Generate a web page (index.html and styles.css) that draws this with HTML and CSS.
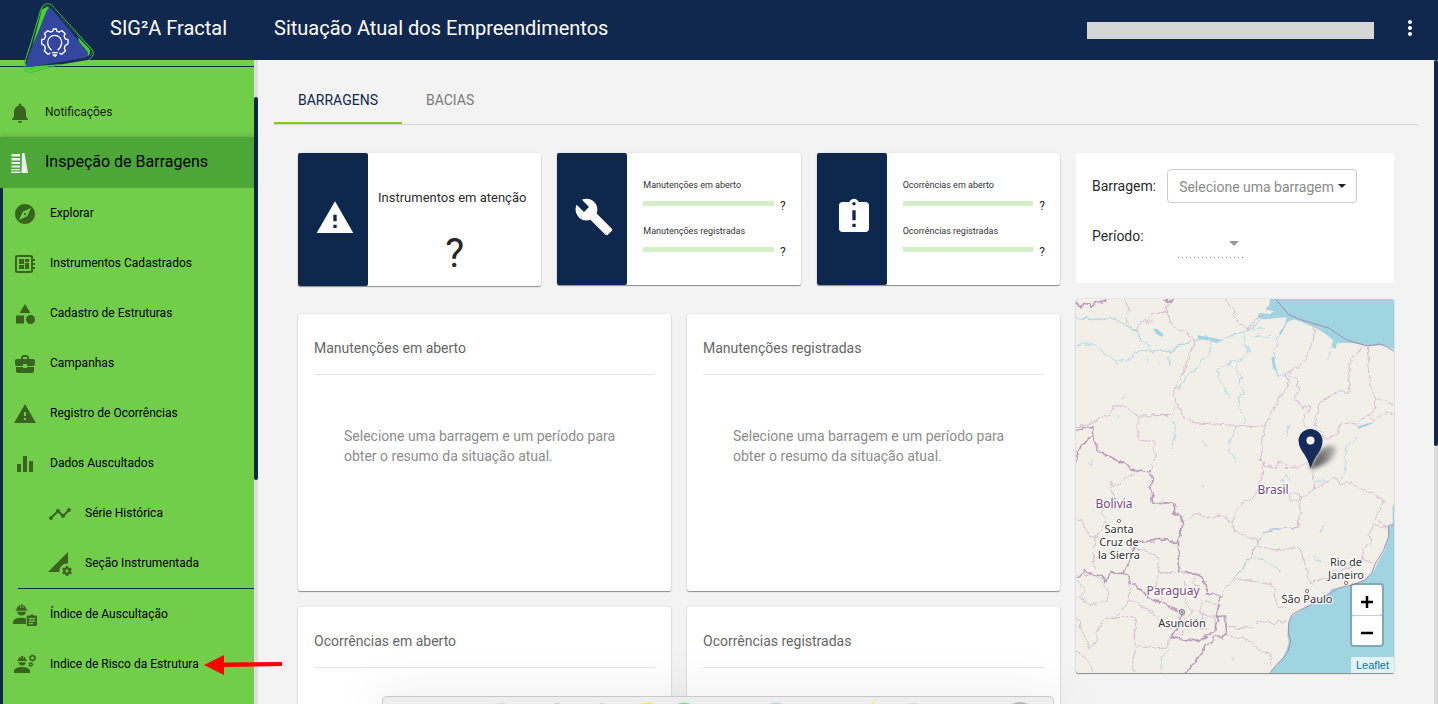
FILE: index.html
```html
<!DOCTYPE html>
<html lang="pt-BR">
<head>
<meta charset="utf-8">
<title>SIG²A Fractal</title>
<link rel="stylesheet" href="styles.css">
</head>
<body>
<header class="topbar">
  <a class="brand" href="#">
    <svg class="logo" viewBox="69 0 216 222" aria-hidden="true">
      <path d="M126 21Q134 8 149 12Q158 15 164 25L274 146Q288 163 270 176Q264 180 255 180L180 193L98 216Q68 222 72 194Z" fill="none" stroke="#3fbe39" stroke-width="3"/>
      <path d="M120 30Q126 16 146 18L276 150Q280 166 262 172L92 209Q74 208 78 190Z" fill="none" stroke="#3fae39" stroke-width="1.5"/>
      <path d="M126 28L142 20L148 24L86 180Z" fill="#45d52a"/>
      <path d="M152 18L270 164Q271 176 262 180L176 194L86 202Q72 196 78 180Z" fill="#1c2a56"/>
      <path d="M234 112L268 146Q275 158 264 168L240 150ZM78 200L190 192L92 209Q82 208 78 200Z" fill="#45d52a"/>
      <path d="M144 26Q150 22 156 28L262 154Q268 166 256 173L90 201Q76 200 79 186L138 36Z" fill="#34479e"/>
      <g fill="none" stroke="#fff" stroke-width="4" stroke-linejoin="round">
        <path d="M151 159L144 163L133 153L136 145L133 136L125 132V119L133 117L137 108L133 101L143 92L151 96L158 94L160 87H169L171 94L178 96L186 92L196 101L192 108L196 117L204 119V132L196 136L193 145L196 153L185 163L178 159"/>
        <path d="M155 151Q143 141 143 127A21 21 0 0 1 185 127Q185 141 173 151"/>
        <path d="M156 158H173M158 165H171M162 169H167"/>
      </g>
    </svg>
    <span class="brand-name">SIG²A Fractal</span>
  </a>
  <h1 class="page-title">Situação Atual dos Empreendimentos</h1>
  <div class="user-box"></div>
  <button class="more" aria-label="Mais opções"><svg viewBox="0 0 24 24"><path d="M12 8c1.100 0 2-.9 2-2s-.9-2-2-2-2 .9-2 2 .9 2 2 2zm0 2c-1.100 0-2 .9-2 2s.9 2 2 2 2-.9 2-2-.9-2-2-2zm0 6c-1.100 0-2 .9-2 2s.9 2 2 2 2-.9 2-2-.9-2-2-2z"/></svg></button>
</header>

<div class="shell">
  <nav class="sidebar">
    <a class="nav-item" href="#"><svg class="icon" viewBox="0 0 24 24"><path d="M12 22c1.100 0 2-.9 2-2h-4c0 1.100.89 2 2 2zm6-6v-5c0-3.070-1.640-5.640-4.500-6.320V4c0-.83-.67-1.500-1.500-1.500s-1.500.67-1.500 1.500v.68C7.630 5.360 6 7.920 6 11v5l-2 2v1h16v-1l-2-2z"/></svg>Notificações</a>
    <a class="nav-item active" href="#"><svg class="icon" viewBox="0 0 24 24"><path d="M3.500 3h8.500v2.500H3.500zM3.500 7H12v2.500H3.500zM3.500 11H12v2H3.500zM3.500 14.500H12v2H3.500zM3 18h9v1.300H3zM3 20.500h9.500V22H3zM14 2h2.500L20 22h-6.500z"/></svg>Inspeção de Barragens</a>
    <div class="submenu">
      <a class="nav-item" href="#"><svg class="icon" viewBox="0 0 24 24"><path d="M12 10.900c-.61 0-1.100.49-1.100 1.100s.49 1.100 1.100 1.100c.61 0 1.100-.49 1.100-1.100s-.49-1.100-1.100-1.100zM12 2C6.480 2 2 6.480 2 12s4.480 10 10 10 10-4.480 10-10S17.520 2 12 2zm2.190 12.190L6 18l3.810-8.190L18 6l-3.810 8.190z"/></svg>Explorar</a>
      <a class="nav-item" href="#"><svg class="icon" viewBox="0 0 24 24"><path d="M22 9V7h-2V5c0-1.100-.9-2-2-2H4c-1.100 0-2 .9-2 2v14c0 1.100.9 2 2 2h14c1.100 0 2-.9 2-2v-2h2v-2h-2v-2h2v-2h-2V9h2zm-4 10H4V5h14v14zM6 13h5v4H6zM12 7h4v3h-4zM6 7h5v5H6zM12 11h4v6h-4z"/></svg>Instrumentos Cadastrados</a>
      <a class="nav-item" href="#"><svg class="icon" viewBox="0 0 24 24"><path d="M12 2L6.500 11h11zM3 13.500h8v8H3z"/><circle cx="17.500" cy="17.500" r="4.500"/></svg>Cadastro de Estruturas</a>
      <a class="nav-item" href="#"><svg class="icon" viewBox="0 0 24 24"><path d="M10 16v-1H3.010L3 19c0 1.110.89 2 2 2h14c1.110 0 2-.89 2-2v-4h-7v1h-4zm10-9h-4.010V5l-2-2h-4l-2 2v2H4c-1.100 0-2 .9-2 2v3c0 1.110.89 2 2 2h6v-2h4v2h6c1.100 0 2-.9 2-2V9c0-1.100-.9-2-2-2zm-6 0h-4V5h4v2z"/></svg>Campanhas</a>
      <a class="nav-item" href="#"><svg class="icon" viewBox="0 0 24 24"><path d="M1 21h22L12 2 1 21zm12-3h-2v-2h2v2zm0-4h-2v-4h2v4z"/></svg>Registro de Ocorrências</a>
      <a class="nav-item" href="#"><svg class="icon" viewBox="0 0 24 24"><path d="M10 20h4V4h-4v16zm-6 0h4v-8H4v8zM16 9v11h4V9h-4z"/></svg>Dados Auscultados</a>
      <a class="nav-item nested" href="#"><svg class="icon" viewBox="0 0 24 24"><path d="M23 8c0 1.100-.9 2-2 2-.18 0-.35-.02-.51-.07l-3.560 3.550c.05.16.07.34.07.52 0 1.100-.9 2-2 2s-2-.9-2-2c0-.18.02-.36.07-.52l-2.550-2.550c-.16.05-.34.07-.52.07s-.36-.02-.52-.07l-4.550 4.560c.05.16.07.33.07.51 0 1.100-.9 2-2 2s-2-.9-2-2 .9-2 2-2c.18 0 .35.02.51.07l4.560-4.550C8.020 9.360 8 9.180 8 9c0-1.100.9-2 2-2s2 .9 2 2c0 .18-.02.36-.07.52l2.550 2.550c.16-.05.34-.07.52-.07s.36.02.52.07l3.550-3.560C19.020 8.350 19 8.180 19 8c0-1.100.9-2 2-2s2 .9 2 2z"/></svg>Série Histórica</a>
      <a class="nav-item nested" href="#"><svg class="icon" viewBox="0 0 24 24"><path d="M18.990 11.500c.34 0 .67.03 1 .07L20 0 0 20h11.560c-.04-.33-.07-.66-.07-1 0-4.140 3.360-7.500 7.500-7.500zm3.710 7.990c.02-.16.04-.32.04-.49 0-.17-.01-.33-.04-.49l1.060-.83c.09-.08.12-.21.06-.32l-1-1.730c-.06-.11-.19-.15-.31-.11l-1.240.5c-.26-.2-.54-.37-.85-.49l-.19-1.320c-.01-.12-.12-.21-.24-.21h-2c-.12 0-.23.09-.25.21l-.19 1.320c-.3.13-.59.29-.85.49l-1.240-.5c-.11-.04-.24 0-.31.11l-1 1.730c-.06.11-.04.24.06.32l1.060.83c-.02.16-.03.32-.03.49 0 .17.01.33.03.49l-1.060.83c-.09.08-.12.21-.06.32l1 1.730c.06.11.19.15.31.11l1.240-.5c.26.2.54.37.85.49l.19 1.320c.02.12.12.21.25.21h2c.12 0 .23-.09.25-.21l.19-1.320c.3-.13.59-.29.84-.49l1.250.5c.11.04.24 0 .31-.11l1-1.730c.06-.11.03-.24-.06-.32l-1.070-.83zm-3.710 1.010c-.83 0-1.500-.67-1.500-1.500s.67-1.500 1.500-1.500 1.500.67 1.500 1.500-.67 1.500-1.500 1.500z"/></svg>Seção Instrumentada</a>
      <hr class="nav-rule">
      <a class="nav-item" href="#"><svg class="icon" viewBox="0 0 24 24"><path d="M3.500 6.500Q4 3 7 2v3h.7V1.200h2V5h.7V2Q13 3 13.500 6.500h.7v1.200H2.800V6.500zM4 8.800h9Q12.500 12.500 8.500 12.500T4 8.800zM0 21v-2.500Q1 15 8 14.800q3 0 5 .7V21z"/><path d="M15 12.500h2.500q1.500-2.500 3 0H23q1 0 1 1V22q0 1-1 1h-8q-1.200 0-1.200-1v-8.500q0-1 1.200-1zM15.800 15v1.300h6.400V15zm0 2.500v1.200h6.400v-1.200zm0 2.500v1.200h4.200V20z" fill-rule="evenodd"/></svg>Índice de Auscultação</a>
      <a class="nav-item" href="#"><svg class="icon" viewBox="0 0 24 24"><path d="M5 7Q5.500 4.300 7.600 3.800v2h.6V3h2v2.800h.6v-2Q13 4.300 13.300 7h.7v1.100H4.300V7zM5.500 9.300h7.300Q12.500 12.500 9.200 12.500T5.500 9.300zM1 20v-2.400Q2 14.200 9 14.100t8 3.500V20z"/><g fill="none" stroke="currentColor"><circle cx="19.500" cy="5" r="2.300" stroke-width="1.500"/><circle cx="19.500" cy="5" r="3.200" stroke-width="1" stroke-dasharray="1.600 1.750"/><circle cx="17.800" cy="11.500" r="1.400" stroke-width="1.200"/><circle cx="17.800" cy="11.500" r="2.200" stroke-width=".8" stroke-dasharray="1.100 1.200"/></g></svg>Indice de Risco da Estrutura
        <svg class="pointer" viewBox="0 0 78 20" aria-hidden="true"><path d="M20 7.500L78 7V11L20 12z" fill="#f00"/><path d="M0 10L20 0V20z" fill="#f00"/></svg>
      </a>
    </div>
  </nav>
  <div class="rail side-rail"><div class="thumb"></div></div>

  <main class="content">
    <div class="tabs" role="tablist">
      <button class="tab selected" role="tab" aria-selected="true">BARRAGENS</button>
      <button class="tab" role="tab" aria-selected="false">BACIAS</button>
    </div>
    <div class="board">
      <div class="primary">
        <div class="stats">
          <section class="stat stat-alert">
            <div class="stat-icon"><svg viewBox="0 0 24 24"><path d="M1 21h22L12 2 1 21zm12-3h-2v-2h2v2zm0-4h-2v-4h2v4z"/></svg></div>
            <div class="stat-main"><p class="stat-title">Instrumentos em atenção</p><p class="stat-value">?</p></div>
          </section>
          <section class="stat">
            <div class="stat-icon"><svg viewBox="0 0 24 24"><path d="M22.700 19l-9.100-9.100c.9-2.300.4-5-1.500-6.900-2-2-5-2.400-7.400-1.300L9 6 6 9 1.600 4.700C.4 7.100.9 10.100 2.900 12.100c1.900 1.900 4.600 2.400 6.900 1.500l9.100 9.100c.4.4 1 .4 1.400 0l2.300-2.300c.5-.4.5-1.100.1-1.400z"/></svg></div>
            <div class="stat-bars">
              <div class="meter"><p class="meter-label">Manutenções em aberto</p><div class="meter-row"><span class="track"></span><span>?</span></div></div>
              <div class="meter"><p class="meter-label">Manutenções registradas</p><div class="meter-row"><span class="track"></span><span>?</span></div></div>
            </div>
          </section>
          <section class="stat">
            <div class="stat-icon"><svg viewBox="0 0 24 24"><path d="M19 3h-4.180C14.400 1.840 13.300 1 12 1c-1.300 0-2.400.84-2.820 2H5c-1.100 0-2 .9-2 2v14c0 1.100.9 2 2 2h14c1.100 0 2-.9 2-2V5c0-1.100-.9-2-2-2zm-6 15h-2v-2h2v2zm0-4h-2V8h2v6zm-1-9c-.55 0-1-.45-1-1s.45-1 1-1 1 .45 1 1-.45 1-1 1z"/></svg></div>
            <div class="stat-bars">
              <div class="meter"><p class="meter-label">Ocorrências em aberto</p><div class="meter-row"><span class="track"></span><span>?</span></div></div>
              <div class="meter"><p class="meter-label">Ocorrências registradas</p><div class="meter-row"><span class="track"></span><span>?</span></div></div>
            </div>
          </section>
        </div>
        <div class="panels">
          <section class="panel"><h2>Manutenções em aberto</h2><p>Selecione uma barragem e um período para obter o resumo da situação atual.</p></section>
          <section class="panel"><h2>Manutenções registradas</h2><p>Selecione uma barragem e um período para obter o resumo da situação atual.</p></section>
          <section class="panel"><h2>Ocorrências em aberto</h2></section>
          <section class="panel"><h2>Ocorrências registradas</h2></section>
        </div>
      </div>
      <aside class="secondary">
        <form class="filters">
          <div class="field"><label for="dam">Barragem:</label>
            <div class="select-wrap"><select id="dam" class="dam-select"><option>Selecione uma barragem</option></select><svg class="caret" viewBox="0 0 8 4"><path d="M0 0h8L4 4z"/></svg></div></div>
          <div class="field"><label for="period">Período:</label>
            <div class="select-wrap period-wrap"><select id="period" class="period-select" disabled><option></option></select><svg class="caret" viewBox="0 0 10 5"><path d="M0 0h10L5 5z"/></svg><svg class="dots" viewBox="0 0 67 1"><path d="M0 0.5H67"/></svg></div></div>
        </form>
        <div class="map">
          <svg class="map-art" viewBox="0 0 318 374" preserveAspectRatio="xMidYMid slice">
            <defs>
              <filter id="soft" x="-50%" y="-50%" width="200%" height="200%"><feGaussianBlur stdDeviation="2"/></filter>
              <filter id="wander" x="0" y="0" width="100%" height="100%"><feTurbulence type="fractalNoise" baseFrequency=".045" numOctaves="3" seed="4"/><feDisplacementMap in="SourceGraphic" scale="20" xChannelSelector="R" yChannelSelector="G"/></filter>
              <linearGradient id="shade" x1="0" x2="1"><stop offset="0" stop-color="#222" stop-opacity=".9"/><stop offset="1" stop-color="#222" stop-opacity=".25"/></linearGradient>
            </defs>
            <g transform="translate(-6 -9) scale(.33333)">
              <g class="water">
                <path d="M600 20H980V182L940 166L892 168L850 160L822 158L800 160L798 176L786 172L788 150L770 134L752 122L732 112L700 98L672 88L652 96L640 120L632 136L626 132L645 104L650 82L620 84L580 88L562 82L568 70L600 72L612 64L585 58L598 46Z"/>
                <path d="M980 630L968 648L968 704L954 712L956 740L945 778L926 812L912 842L884 870L834 890L786 896L776 910L742 932L715 948L680 968L660 984L654 1008L652 1034L656 1058L648 1084L640 1102L620 1126L596 1152H980Z"/>
                <path d="M604 202L612 200L616 226L622 244L610 238ZM250 116L262 118L280 132L276 140L262 134L256 128ZM862 410L886 402L912 396L906 402L888 408L866 416ZM382 136L420 142L458 150L440 160L420 152L386 148Z"/>
              </g>
              <g class="rivers" filter="url(#wander)">
                <path d="M16 82L40 86L76 90L100 86L130 86L150 96L176 112L202 124L212 144L230 168L244 182L282 180L306 186L320 170L350 158L374 152L400 142L440 156L456 148L480 138L516 126L540 120L560 102L572 84L596 74" stroke-width="4"/>
                <path d="M16 166L50 158L66 162L82 176L100 186L124 206L136 214L160 208L184 210L196 190L216 182L244 182M124 206L146 224M240 196L232 212M270 212L266 226M292 206L296 222"/>
                <path d="M426 154L420 180L410 200L390 218L376 240L352 256L336 284L318 296" stroke-width="3"/>
                <path d="M520 132L526 160L538 180L520 200L502 216L500 240L512 262L510 286L526 306L512 312L502 350L524 380L524 402"/>
                <path d="M520 202L490 214L440 238L450 270L466 302L478 328M524 160L536 190M632 134L620 158L610 180L612 222L622 256L642 258M548 140L602 136M548 104L552 124L582 112M502 410L480 450L476 480L500 518M164 312L156 326M398 452L412 466M400 588L408 590"/>
                <path d="M310 396L316 432L304 476M652 408V444M860 436L830 474L828 522L814 566M630 572L652 552L660 570M736 572L776 574M786 150L804 166M786 168L774 206M50 522L68 518M64 510L62 530M140 376L146 384M636 568L640 580M556 798L590 816L632 840M728 796L748 806M732 812L754 818M762 704L752 732M392 1000L430 968M486 1102L490 1112M270 1150L278 1100L294 1078"/>
                <path d="M330 676L340 694L334 730L322 758M686 708L664 716L634 714L586 724L566 752L540 802L524 828L496 864L470 890L454 914L446 950L438 976L438 1000L432 1030" stroke="#a9bfd8"/>
              </g>
              <g class="states" filter="url(#wander)">
                <path d="M166 27L174 62L170 96L200 124L206 96L224 92L236 104L248 70L292 66M296 27L292 66L296 88L312 112L346 128L376 154L350 220L328 270L308 306L320 330L314 350L310 376L204 378L188 368L160 348H134L120 376L90 382L70 398L46 404L16 412"/>
                <path d="M320 330L340 378L370 398L588 412M468 27L480 48L492 60L500 92L520 112L538 116L546 98L568 80L588 60L618 32"/>
                <path d="M734 104L730 150L718 180L706 206L690 228L664 240L642 258L660 268L654 290L640 310L624 318L624 342L604 372L590 402L576 440L574 514L580 514L576 560L566 590L540 632L518 640L504 662L492 680L488 700L490 722L560 752L566 762L604 778L634 780L686 772L696 790L700 818L714 840L714 862L724 878L750 868L774 864L792 840L826 840L868 830L876 808L910 816"/>
                <path d="M664 240L660 256L682 268L686 306L678 320L696 350L716 350L714 364L700 374L702 402L718 416L730 440L732 506L724 530L730 560L734 596L708 616L694 624L688 648L696 664L686 678L690 706L670 716"/>
                <path d="M878 172L862 190L840 208V240L836 270L840 306L802 306L776 324L750 338L748 360L736 380V402L740 416L756 430L770 448L800 432L814 400L838 396L860 404L892 376L916 352L918 324L906 304L900 264L896 220L892 168M918 326L940 328L952 338L972 344M892 376L914 394L942 368L972 374"/>
                <path d="M574 514L590 530L620 534L622 514L636 518L646 532L666 532L692 530L708 520L724 532M734 596L762 580L792 568L806 566L810 580L836 582L848 576L880 602L912 606L920 622L944 632L926 656L920 688L934 696L954 710L930 712L906 704L900 734L904 752L882 778L876 808"/>
                <path d="M204 378V450L256 456L252 478L262 496L248 520L246 546M340 694L370 676L386 670L426 684L466 678L474 698L492 700M496 868L530 868L544 874L566 876L602 880L612 900L614 926L624 944L646 950L662 968M470 1006L500 1016L548 1012L560 1000L590 996L622 998L650 994M470 1038L510 1042L534 1050L560 1074L584 1090L606 1090L604 1110L598 1122L610 1132"/>
                <path d="M124 570L122 596L136 614L138 640L124 650L80 624L98 642L94 668L106 690L96 720L76 740L70 780L72 840M16 690L36 694L56 740L84 742M186 770L260 794L266 848H316M266 850L256 880L262 910L280 930M178 860V930L138 982L196 984V1072H296L298 1040M178 930L240 962L280 1000L310 1018M138 982H108L84 1008L78 1062L54 1070L46 1036L30 1018L36 998L16 980M16 1080L40 1094L64 1130L68 1150M194 1072L188 1120L194 1150M120 596L200 544M42 860L70 850L98 870L108 900L116 910L110 938L60 944L28 924L44 900L24 872M380 850L364 878L388 892L386 920L402 936L440 942M346 870L350 900L346 940L370 966L344 988L362 1020M388 964L400 940M378 962L430 986M400 966L390 1000M428 972L432 1020M344 1004L420 1018M346 1018L334 1036M656 612H688V630H656Z"/>
              </g>
              <g class="countries" filter="url(#wander)">
                <path d="M16 36L30 48L44 40L64 48L76 44L82 36L100 36L110 28M280 28L300 34L310 26M16 422L40 412L72 410L70 430L76 462L88 486L124 502L158 518L188 538L220 542L240 546L246 574L242 600L248 636L312 640L310 670L330 680L340 700L332 726L322 762L326 846L376 850L390 854L404 876L410 910L452 920L446 944L440 980L466 978L470 1030L456 1040L440 1038L408 1068L386 1102L364 1128L346 1150"/>
                <path d="M70 432L34 466L24 486L16 520M16 862L36 854L44 838L50 848L84 852L94 856L108 876L122 848L160 850L174 858L184 878L210 896L240 926L280 940L310 956L336 966L330 1010L302 1042L352 1050L376 1052L404 1044L432 1030L442 980M160 850L180 806L202 758L290 746L324 766"/>
              </g>
              <path class="maritime" d="M618 28L656 74L690 88L734 102L776 114L830 150L892 168L930 162L950 170L972 184M972 704L956 706L956 740L940 782L916 820L906 848L884 870L850 884L806 894L780 910L744 930L716 948L690 960L666 974L656 998L656 1034L662 1050L656 1080L640 1104L622 1122L600 1148"/>
            </g>
            <g class="places"><circle cx="43" cy="222" r="1.600"/><circle cx="231" cy="292" r="1.600"/><circle cx="270" cy="284" r="1.600"/><circle cx="106" cy="313" r="2.500"/><circle cx="106" cy="313" r="1"/></g>
            <g class="map-text country">
              <text x="197" y="195">Brasil</text><text x="38" y="209">Bolivia</text><text x="97" y="296">Paraguay</text>
            </g>
            <g class="map-text">
              <text x="43" y="234">Santa</text><text x="43" y="247">Cruz de</text><text x="43" y="260">la Sierra</text>
              <text x="270" y="267">Rio de</text><text x="270" y="280">Janeiro</text><text x="231" y="304">São Paulo</text><text x="106" y="328">Asunción</text>
            </g>
            <path d="M234 170L242 154Q250 145 258 147Q263 154 252 163Q244 168 234 170Z" fill="url(#shade)" filter="url(#soft)"/>
            <path d="M234.500 169.500Q232 160 226 152Q222.500 147 222.500 142A12 12 0 0 1 246.500 142Q246.500 147 243 153Q237 161 234.500 169.500Z" fill="#152c5b"/>
            <circle cx="234.500" cy="141.500" r="4" fill="#fff"/>
          </svg>
          <div class="zoom"><button aria-label="Aproximar"><svg viewBox="0 0 14 14"><path d="M1 7h12M7 1v12"/></svg></button><button aria-label="Afastar"><svg viewBox="0 0 14 14"><path d="M1 7h12"/></svg></button></div>
          <a class="credit" href="#">Leaflet</a>
        </div>
      </aside>
    </div>
  </main>
  <div class="rail page-rail"><div class="thumb"></div></div>
</div>
<div class="dock"><svg viewBox="0 0 670 7" aria-hidden="true"><path d="M112 7q6-3 12 0z" fill="#ddd"/><path d="M171 7q3-3 6 0zM216 7q3-2 6 0z" fill="#d0d0d0"/><path d="M256 7l4-1 9-1 1 2z" fill="#f2e66f"/><path d="M294 7q7-3 14 0z" fill="#77dfa0"/><path d="M386 7q7-3 14 0z" fill="#a5dbe0"/><path d="M488 7l2-3 2 3z" fill="#fbf75a"/><path d="M524 7q6-2 12 0z" fill="#ddd"/><path d="M629 7q8-4 16 0z" fill="#b5b5b5"/></svg></div>
</body>
</html>
```

FILE: styles.css
```css
:root {
  --navy: #10274e;
  --green: #72ce4a;
  --text: rgba(0, 0, 0, .87);
}
* { box-sizing: border-box; }
body {
  margin: 0;
  height: 100vh;
  overflow: hidden;
  display: flex;
  flex-direction: column;
  background: #f3f3f3;
  color: var(--text);
  font-family: Roboto, "Liberation Sans", sans-serif;
  font-size: 14px;
  line-height: 20px;
}
h1, h2, p, form { margin: 0; font-weight: 400; }
a { color: inherit; text-decoration: none; }
button, select { font: inherit; color: inherit; }

.topbar {
  position: relative;
  z-index: 2;
  flex: none;
  height: 60px;
  display: flex;
  align-items: center;
  padding-right: 16px;
  background: var(--navy);
  color: #fff;
}
.brand {
  align-self: flex-start;
  width: 274px;
  height: 60px;
  display: flex;
  gap: 15px;
  padding-left: 23px;
}
.logo { flex: none; width: 72px; height: 74px; }
.brand-name, .page-title { font-size: 20px; line-height: 56px; }
.page-title { align-self: flex-start; }
.user-box { margin-left: auto; width: 287px; height: 17px; background: #d6d6d6; }
.more { align-self: flex-start; width: 24px; height: 56px; margin-left: 24px; padding: 0; border: 0; background: none; }
.more svg { display: block; width: 24px; fill: #fff; }

.shell { flex: 1; min-height: 0; display: flex; }
.sidebar {
  position: relative;
  z-index: 1;
  flex: none;
  width: 254px;
  margin-top: 6px;
  padding-top: 20px;
  border-top: 1px solid var(--navy);
  background: var(--green);
  box-shadow: 0 -6px var(--green);
}
.nav-item {
  position: relative;
  display: flex;
  align-items: center;
  gap: 13px;
  height: 50px;
  padding-left: 8px;
  font-size: 12px;
}
.icon { flex: none; width: 24px; height: 24px; margin-top: 2px; fill: currentColor; color: #38641f; }
.active {
  height: 51px;
  padding-bottom: 2px;
  background: #4ca638;
  color: #000;
  font-size: 16px;
  box-shadow: 0 -1px 5px rgba(0, 0, 0, .2);
}
.active .icon { color: #eee; }
.submenu { position: relative; height: calc(100vh - 188px); border-left: 3px solid var(--navy); background: var(--green); color: #000; }
.submenu .nav-item { padding-left: 10px; }
.submenu .nested { padding-left: 45px; }
.nav-rule { margin: 0 0 0 15px; border: 0; border-top: 1px solid var(--navy); }
.pointer { position: absolute; left: 201px; top: 16px; width: 78px; height: 20px; }

.rail { flex: none; width: 4px; background: #ddd; }
.thumb { background: var(--navy); border-radius: 2px; }
.side-rail { padding-top: 37px; }
.side-rail .thumb { height: 383px; }
.page-rail .thumb { height: 386px; }

.content { flex: 1; min-width: 0; padding: 16px; overflow: hidden; }
.tabs { display: flex; height: 49px; border-bottom: 1px solid #d4d4d4; }
.tab { height: 48px; padding: 2px 24px 0; border: 0; border-bottom: 2px solid transparent; background: none; color: #7b7b7b; }
.selected { color: var(--navy); border-color: #84cc16; }

.board {
  display: grid;
  grid-template-columns: minmax(0, 762fr) minmax(0, 318fr);
  gap: 16px;
  padding: 28px 24px;
}
.stats { display: grid; grid-template-columns: repeat(3, minmax(0, 1fr)); align-items: start; gap: 16px; }
.stat, .panel, .map {
  border-radius: 2px;
  background: #fff;
  box-shadow: 0 1px 1px rgba(0, 0, 0, .4), 0 0 2px rgba(0, 0, 0, .15);
}
.stat { display: flex; height: 132px; }
.stat-alert { height: 133px; }
.stat-icon {
  flex: none;
  width: 70px;
  display: flex;
  align-items: center;
  justify-content: center;
  padding: 0 0 4px 4px;
  border-radius: 2px;
  background: #0e274d;
}
.stat-icon svg { width: 40px; fill: #fff; }
.stat-main { flex: 1; padding: 35px 0 0 10px; }
.stat-title { font-size: 13px; }
.stat-value { margin-top: 26px; padding-right: 10px; font-size: 40px; line-height: 40px; text-align: center; }
.stat-bars { flex: 1; padding: 24px 15px 24px 16px; }
.meter { height: 46px; }
.meter-label { font-size: 9px; line-height: 16px; color: #333; }
.meter-row { display: flex; align-items: center; gap: 6px; margin-top: 5px; font-size: 12px; line-height: 16px; }
.track { flex: 1; height: 5px; margin-bottom: 6px; background: #d5f0c8; }

.panels { display: grid; grid-template-columns: repeat(2, minmax(0, 1fr)); gap: 16px; margin-top: 28px; }
.panel { height: 277px; padding: 0 16px; }
.panel h2 { padding: 24px 0 16px; border-bottom: 1px solid #e6e6e6; font-size: 14px; color: #666; }
.panel p { padding: 51px 30px; color: #8c8c8c; }

.filters { height: 130px; padding: 16px; border-radius: 2px; background: #fff; }
.field { display: flex; gap: 11px; margin-bottom: 16px; line-height: 34px; }
.field label { min-width: 64px; }
.select-wrap { position: relative; height: 34px; }
.dam-select { appearance: none; width: 190px; height: 34px; padding: 0 11px 2px; border: 1px solid #ccc; border-radius: 4px; background: #fff; color: #8a8a8a; }
.caret { position: absolute; right: 11px; top: 15px; width: 8px; height: 4px; fill: #222; pointer-events: none; }
.period-wrap { margin-left: 11px; }
.period-select { appearance: none; width: 67px; height: 38px; border: 0; background: none; }
.period-wrap .caret { right: 6px; top: 22px; width: 10px; height: 5px; fill: #999; }
.dots { position: absolute; left: 0; top: 38px; width: 67px; height: 1px; stroke: #888; stroke-dasharray: 1 3; }

.map { position: relative; margin-top: 16px; aspect-ratio: 318 / 374; overflow: hidden; background: #f2efe9; }
.map-art { display: block; width: 100%; height: 100%; }
.water { fill: #9fd4e0; }
.rivers, .states, .countries, .maritime { fill: none; stroke-linejoin: round; }
.rivers { stroke: #b0dce5; stroke-width: 3; }
.states { stroke: #d6bdd0; stroke-width: 3; }
.countries { stroke: #bd98b8; stroke-width: 5; }
.maritime { stroke: #a58bb4; stroke-width: 3; }
.places { fill: #fff; stroke: #555; stroke-width: .8; }
.map-text { font: 11px "Noto Sans", sans-serif; text-anchor: middle; fill: #333; stroke: #fff; stroke-opacity: .8; stroke-width: 2.5px; paint-order: stroke; stroke-linejoin: round; }
.country { font-size: 12px; fill: #7d4a7c; }
.zoom { position: absolute; right: 10px; bottom: 26px; display: grid; border: 2px solid rgba(0, 0, 0, .2); border-radius: 4px; background-clip: padding-box; }
.zoom button { width: 30px; height: 30px; padding: 10px 8px 6px; border: 0; background: #fff; border-radius: 2px; }
.zoom button + button { border-top: 1px solid #ccc; }
.zoom svg { display: block; width: 14px; stroke: #000; stroke-width: 2.5; }
.credit { position: absolute; right: 0; bottom: 0; padding: 0 5px; background: rgba(255, 255, 255, .7); color: #0078a8; font: 11px/16px "Liberation Sans", sans-serif; }

.dock {
  position: fixed;
  left: 50%;
  bottom: 0;
  z-index: 3;
  width: 672px;
  margin-left: -337px;
  border: 1px solid #c8c8c8;
  border-bottom: 0;
  border-radius: 5px 5px 0 0;
  background: #eee;
  box-shadow: 0 10px 50px rgba(0, 0, 0, .35);
}
.dock svg { display: block; width: 100%; height: 7px; }
```
